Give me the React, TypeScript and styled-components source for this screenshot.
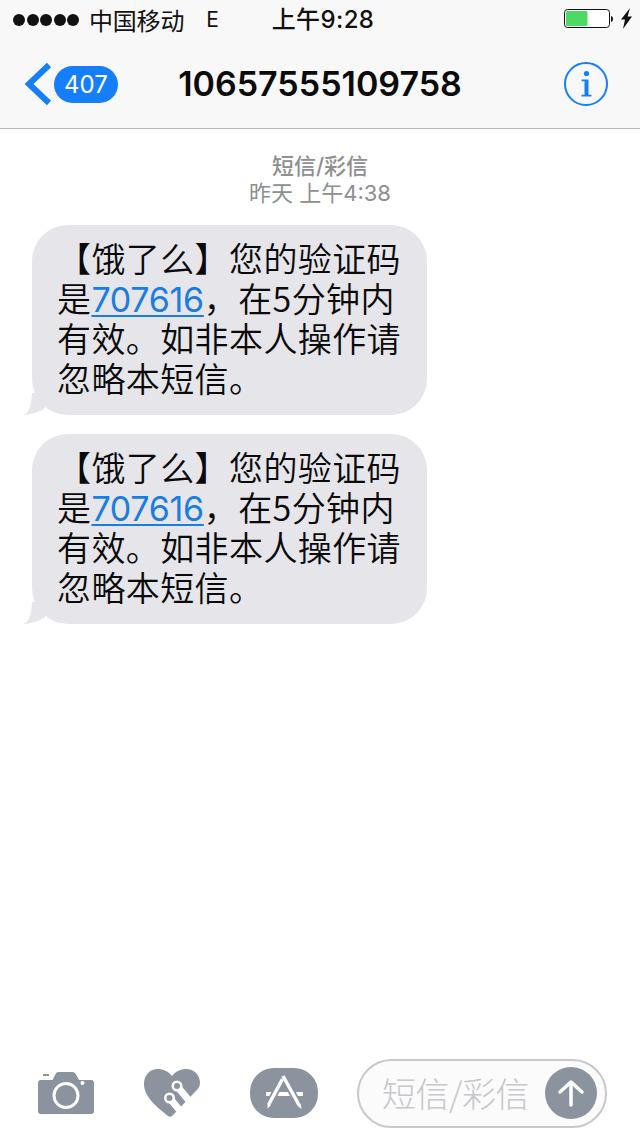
import styled, { createGlobalStyle } from 'styled-components';

const BLUE = '#147efb';
const ICON_GREY = '#8a939e';
const CJK = '"Noto Sans CJK SC", sans-serif';
const SANS = 'Inter, "Noto Sans CJK SC", sans-serif';

function SignalDots() {
  return (
    <Dots>
      {[0, 1, 2, 3, 4].map((i) => (
        <Dot key={i} />
      ))}
    </Dots>
  );
}

function Battery() {
  return (
    <BatteryIcon width="70" height="22" viewBox="0 0 70 22">
      <rect x="1.500" y="1.500" width="45" height="18" rx="3" fill="#fff" stroke="#111" strokeWidth="1" />
      <rect x="3" y="3" width="21.500" height="15" rx="1.500" fill="#4cd964" />
      <path d="M48 8c1.500.3 2 1.500 2 3s-.5 2.700-2 3z" fill="#111" />
      <path d="M67 0l-9 11.500h4L60 21l9-12.500h-4.400z" fill="#111" />
    </BatteryIcon>
  );
}

function InfoIcon() {
  return (
    <svg width="44" height="44" viewBox="0 0 44 44">
      <circle cx="22" cy="22" r="21" fill="none" stroke={BLUE} strokeWidth="2" />
      <circle cx="22.500" cy="11.500" r="2.600" fill={BLUE} />
      <path d="M17.500 17.500h7v15.200h3V34.500h-10v-1.800h3V19.300h-3z" fill={BLUE} />
    </svg>
  );
}

function CameraIcon() {
  return (
    <svg width="56" height="44" viewBox="0 0 56 44">
      <path
        d="M3 9h11.500l3-6q1-2 3-2h14q2 0 3.200 2l3.300 6H53q3 0 3 3v28q0 3-3 3H3q-3 0-3-3V12q0-3 3-3z"
        fill={ICON_GREY}
      />
      <rect x="5" y="3" width="6" height="2" fill={ICON_GREY} />
      <circle cx="28" cy="24.500" r="12" fill="none" stroke="#fff" strokeWidth="3" />
      <circle cx="44.500" cy="12" r="2" fill="#fff" />
    </svg>
  );
}

function HeartIcon() {
  return (
    <svg width="56" height="48" viewBox="0 0 56 48">
      <path
        d="M28 7C24 2 19 0 14 0 6 0 0 6 0 15c0 13 13 23 24 32 1.500 1 3 1 4 0l22-23c4-4 6-6 6-10C56 6 50 0 42 0c-5 0-10 2-14 7z"
        fill={ICON_GREY}
      />
      <g stroke="#fff" strokeLinecap="round" fill="none">
        <path d="M33 17l27 33" strokeWidth="7" />
        <path d="M25.500 29l24 29" strokeWidth="7" />
      </g>
      <circle cx="33" cy="17" r="5.500" fill="#fff" />
      <circle cx="25.500" cy="29" r="5.500" fill="#fff" />
      <circle cx="33" cy="17" r="3" fill={ICON_GREY} />
      <circle cx="25.500" cy="29" r="3" fill={ICON_GREY} />
    </svg>
  );
}

function AppStoreIcon() {
  return (
    <svg width="68" height="50" viewBox="0 0 68 50">
      <rect x="0" y="0" width="68" height="50" rx="24" fill={ICON_GREY} />
      <path d="M16 24h37v4H16z" fill="#fff" />
      <g fill="none" strokeLinecap="butt">
        <path d="M32.500 11L19 36" stroke={ICON_GREY} strokeWidth="7" />
        <path d="M33 8l16 29" stroke={ICON_GREY} strokeWidth="7" />
        <path d="M32.500 11L19 36" stroke="#fff" strokeWidth="3.500" />
        <path d="M33 8l16 29" stroke="#fff" strokeWidth="3.500" />
      </g>
      <path d="M17.500 35l3.500 2-3.500 3.800zM47.500 38l3.500-2 .5 5z" fill="#fff" />
    </svg>
  );
}

function Bubble() {
  return (
    <BubbleBody>
      <BubbleTail width="26" height="24" viewBox="0 0 26 24">
        <path d="M0 24C6 23.500 9.500 17 10 2h14l-1 15C18 21 8 24 0 24z" fill="#e5e5ea" />
      </BubbleTail>
      <BubbleLine>【饿了么】您的验证码</BubbleLine>
      <BubbleLine>
        是<CodeLink>707616</CodeLink>，在5分钟内
      </BubbleLine>
      <BubbleLine>有效。如非本人操作请</BubbleLine>
      <BubbleLine>忽略本短信。</BubbleLine>
    </BubbleBody>
  );
}

export default function App() {
  return (
    <Screen>
      <GlobalStyle />
      <TopBar>
        <StatusBar>
          <StatusLeft>
            <SignalDots />
            <Carrier>中国移动</Carrier>
            <Network>E</Network>
          </StatusLeft>
          <Clock>上午9:28</Clock>
          <StatusRight>
            <Battery />
          </StatusRight>
        </StatusBar>
        <NavBar>
          <BackGroup>
            <svg width="28" height="44" viewBox="0 0 28 44">
              <path d="M25 3L5 22l20 19" fill="none" stroke={BLUE} strokeWidth="6" />
            </svg>
            <UnreadBadge>407</UnreadBadge>
          </BackGroup>
          <Title>10657555109758</Title>
          <InfoSlot>
            <InfoIcon />
          </InfoSlot>
        </NavBar>
      </TopBar>
      <Thread>
        <Stamp>
          <StampKind>短信/彩信</StampKind>
          <StampTime>昨天 上午4:38</StampTime>
        </Stamp>
        <Bubble />
        <Bubble />
      </Thread>
      <Composer>
        <ComposerIcons>
          <CameraIcon />
          <HeartIcon />
          <AppStoreIcon />
        </ComposerIcons>
        <InputPill>
          <Placeholder>短信/彩信</Placeholder>
          <SendButton>
            <svg width="28" height="28" viewBox="0 0 28 28">
              <path
                d="M14 26V3M3 13L14 3l11 10"
                fill="none"
                stroke="#fff"
                strokeWidth="3.500"
                strokeLinecap="round"
                strokeLinejoin="round"
              />
            </svg>
          </SendButton>
        </InputPill>
      </Composer>
    </Screen>
  );
}

const GlobalStyle = createGlobalStyle`
  html, body {
    margin: 0;
    padding: 0;
    background: #fff;
  }
  * {
    box-sizing: border-box;
  }
`;
const Screen = styled.div`
  width: 640px;
  height: 1136px;
  display: flex;
  flex-direction: column;
  overflow: hidden;
  background: #fff;
  font-family: ${SANS};
`;
const TopBar = styled.header`
  height: 129px;
  flex: none;
  display: flex;
  flex-direction: column;
  background: #f8f8f8;
  border-bottom: 1px solid #b8b8ba;
`;
const StatusBar = styled.div`
  height: 40px;
  flex: none;
  display: grid;
  grid-template-columns: 1fr auto 1fr;
  align-items: center;
  padding: 0 7px 0 13px;
  color: #111;
`;
const StatusLeft = styled.div`
  display: flex;
  align-items: center;
`;
const Dots = styled.div`
  display: flex;
  gap: 1.500px;
  margin-right: 10px;
`;
const Dot = styled.span`
  width: 12px;
  height: 12px;
  border-radius: 50%;
  background: #111;
`;
const Carrier = styled.span`
  font-family: ${CJK};
  font-size: 24px;
  line-height: 38px;
  letter-spacing: -0.200px;
`;
const Network = styled.span`
  margin-left: 22px;
  font-size: 21px;
  line-height: 38px;
`;
const Clock = styled.span`
  font-size: 24px;
  font-weight: 500;
  line-height: 40px;
  letter-spacing: 0.400px;
`;
const StatusRight = styled.div`
  display: flex;
  justify-content: flex-end;
`;
const BatteryIcon = styled.svg`
  display: block;
  margin-top: -2px;
`;
const NavBar = styled.nav`
  flex: 1;
  display: grid;
  grid-template-columns: 1fr auto 1fr;
  align-items: center;
  padding: 0 32px 0 24px;
`;
const BackGroup = styled.div`
  display: flex;
  align-items: center;
  gap: 2px;
`;
const UnreadBadge = styled.span`
  width: 64px;
  height: 37px;
  border-radius: 19px;
  background: ${BLUE};
  color: #fff;
  font-size: 24px;
  line-height: 37px;
  text-align: center;
`;
const Title = styled.h1`
  margin: 0 0 0 8px;
  color: #0b0b0b;
  font-size: 34px;
  font-weight: 600;
  line-height: 44px;
`;
const InfoSlot = styled.div`
  display: flex;
  justify-content: flex-end;
`;
const Thread = styled.main`
  flex: 1;
  display: flex;
  flex-direction: column;
  align-items: flex-start;
  padding: 24px 0 0 32px;
`;
const Stamp = styled.div`
  width: 576px;
  margin-bottom: 18px;
  text-align: center;
  color: #8e8e93;
  font-size: 22px;
  line-height: 27px;
`;
const StampKind = styled.div`
  font-weight: 500;
`;
const StampTime = styled.div``;
const BubbleBody = styled.div`
  position: relative;
  width: 395px;
  height: 190px;
  margin-bottom: 19px;
  padding: 13px 0 0 25px;
  border-radius: 36px;
  background: #e5e5ea;
  color: #0a0a0a;
  font-family: ${CJK};
  font-size: 34px;
  font-weight: 350;
  letter-spacing: 0.400px;
  white-space: nowrap;
`;
const BubbleLine = styled.div`
  position: relative;
  height: 40px;
  line-height: 40px;
`;
const BubbleTail = styled.svg`
  position: absolute;
  left: -10px;
  bottom: 0;
`;
const CodeLink = styled.span`
  color: #1a7de0;
  text-decoration: underline;
  text-underline-offset: 3px;
  text-decoration-thickness: 2px;
  font-family: ${SANS};
  font-weight: 400;
  letter-spacing: -0.300px;
`;
const Composer = styled.footer`
  height: 84px;
  flex: none;
  display: flex;
  align-items: center;
  padding: 0 33px 2px 38px;
  justify-content: space-between;
`;
const ComposerIcons = styled.div`
  display: flex;
  align-items: center;
  gap: 50px;
`;
const InputPill = styled.div`
  width: 250px;
  height: 69px;
  display: flex;
  align-items: center;
  justify-content: space-between;
  padding: 0 8px 0 23px;
  border: 2px solid #c8c8cd;
  border-radius: 35px;
  background: #fbfbfb;
`;
const Placeholder = styled.span`
  color: #c7c7cc;
  font-family: ${CJK};
  font-size: 34px;
  font-weight: 300;
  line-height: 40px;
  letter-spacing: -0.500px;
`;
const SendButton = styled.span`
  width: 52px;
  height: 52px;
  flex: none;
  display: flex;
  align-items: center;
  justify-content: center;
  border-radius: 50%;
  background: ${ICON_GREY};
`;
